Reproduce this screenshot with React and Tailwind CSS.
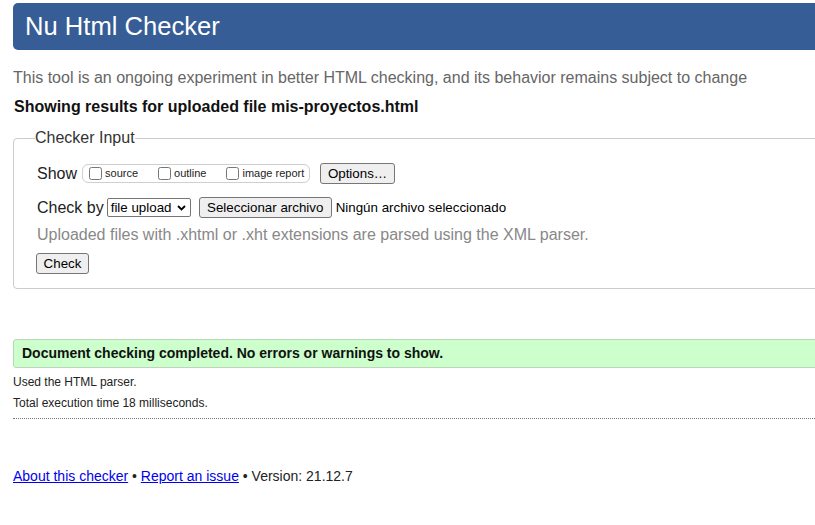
import React from 'react';

const Btn = ({ children, className = '' }) => (
  <button
    type="button"
    className={`h-[21px] px-[6px] bg-[#efefef] border border-[#767676] rounded-[3px] text-[13.33px] leading-none text-black ${className}`}
  >
    {children}
  </button>
);

const Opt = ({ label, className = '' }) => (
  <label className={`flex items-center ${className}`}>
    <input type="checkbox" className="w-[13px] h-[13px] m-0" />
    <span className="ml-[3px] text-[11px] text-[#222]">{label}</span>
  </label>
);

export default function App() {
  return (
    <div className="w-[815px] h-[525px] overflow-hidden bg-white font-['Liberation_Sans',Arial,sans-serif] text-[#222]">
      <div className="pl-[13px] w-[845px]">
        {/* Title bar */}
        <header className="mt-[3px] h-[47px] rounded-l-[5px] bg-[#365d95] pl-[12px] flex items-center">
          <h1 className="text-[25.6px] leading-none text-white">Nu Html Checker</h1>
        </header>

        <p className="mt-[19px] text-[16px] leading-[18px] text-[#666]">
          This tool is an ongoing experiment in better HTML checking, and its behavior remains subject to change
        </p>
        <p className="mt-[11px] pl-px text-[16px] leading-[18px] font-bold text-[#111]">
          Showing results for uploaded file mis-proyectos.html
        </p>

        {/* Checker input form */}
        <fieldset className="mt-[13px] border border-[#cccccc] rounded-[4px] pl-[23px] pb-[13px]">
          <legend className="-ml-[2px] text-[16px] leading-[18px] text-[#333]">Checker Input</legend>

          <div className="mt-[16px] h-[21px] flex items-center">
            <span className="text-[16px] leading-[18px]">Show</span>
            <div className="ml-[5px] h-[19px] w-[228px] border border-[#cfcfcf] rounded-[6px] flex items-center pl-[6px]">
              <Opt label="source" />
              <Opt label="outline" className="ml-[20px]" />
              <Opt label="image report" className="ml-[20px]" />
            </div>
            <Btn className="ml-[10px] w-[75px]">Options…</Btn>
          </div>

          <div className="mt-[13px] h-[21px] flex items-center">
            <span className="text-[16px] leading-[18px]">Check by</span>
            <div className="ml-[3px] h-[19px] w-[84px] border border-[#767676] rounded-[2px] bg-white flex items-center justify-between pl-[3px] pr-[4px]">
              <span className="text-[13.33px] leading-none text-black">file upload</span>
              <svg width="9" height="6" viewBox="0 0 9 6" fill="none">
                <path d="M1 1l3.5 3.5L8 1" stroke="#000" strokeWidth="1.8" />
              </svg>
            </div>
            <Btn className="ml-[8px] w-[133px]">Seleccionar archivo</Btn>
            <span className="ml-[4px] text-[13.33px] text-black">Ningún archivo seleccionado</span>
          </div>

          <p className="mt-[8px] text-[16px] leading-[18px] text-[#888]">
            Uploaded files with .xhtml or .xht extensions are parsed using the XML parser.
          </p>

          <div className="mt-[7px] -ml-[1px]">
            <Btn className="w-[53px]">Check</Btn>
          </div>
        </fieldset>

        {/* Results */}
        <div className="mt-[50px] h-[29px] bg-[#ccffcc] border border-[#bcd6bc] rounded-l-[3px] flex items-center pl-[8px]">
          <span className="text-[14px] font-bold text-[#111]">
            Document checking completed. No errors or warnings to show.
          </span>
        </div>

        <div className="border-b border-dotted border-[#777] pb-[8px]">
          <p className="mt-[7px] text-[12px] leading-[14px]">Used the HTML parser.</p>
          <p className="mt-[7px] text-[12px] leading-[14px]">Total execution time 18 milliseconds.</p>
        </div>

        <footer className="mt-[49px] text-[14px] leading-[16px] text-[#222]">
          <a href="#about" className="text-[#0000ee] underline">About this checker</a>
          {' • '}
          <a href="#issue" className="text-[#0000ee] underline">Report an issue</a>
          {' • Version: 21.12.7'}
        </footer>
      </div>
    </div>
  );
}
